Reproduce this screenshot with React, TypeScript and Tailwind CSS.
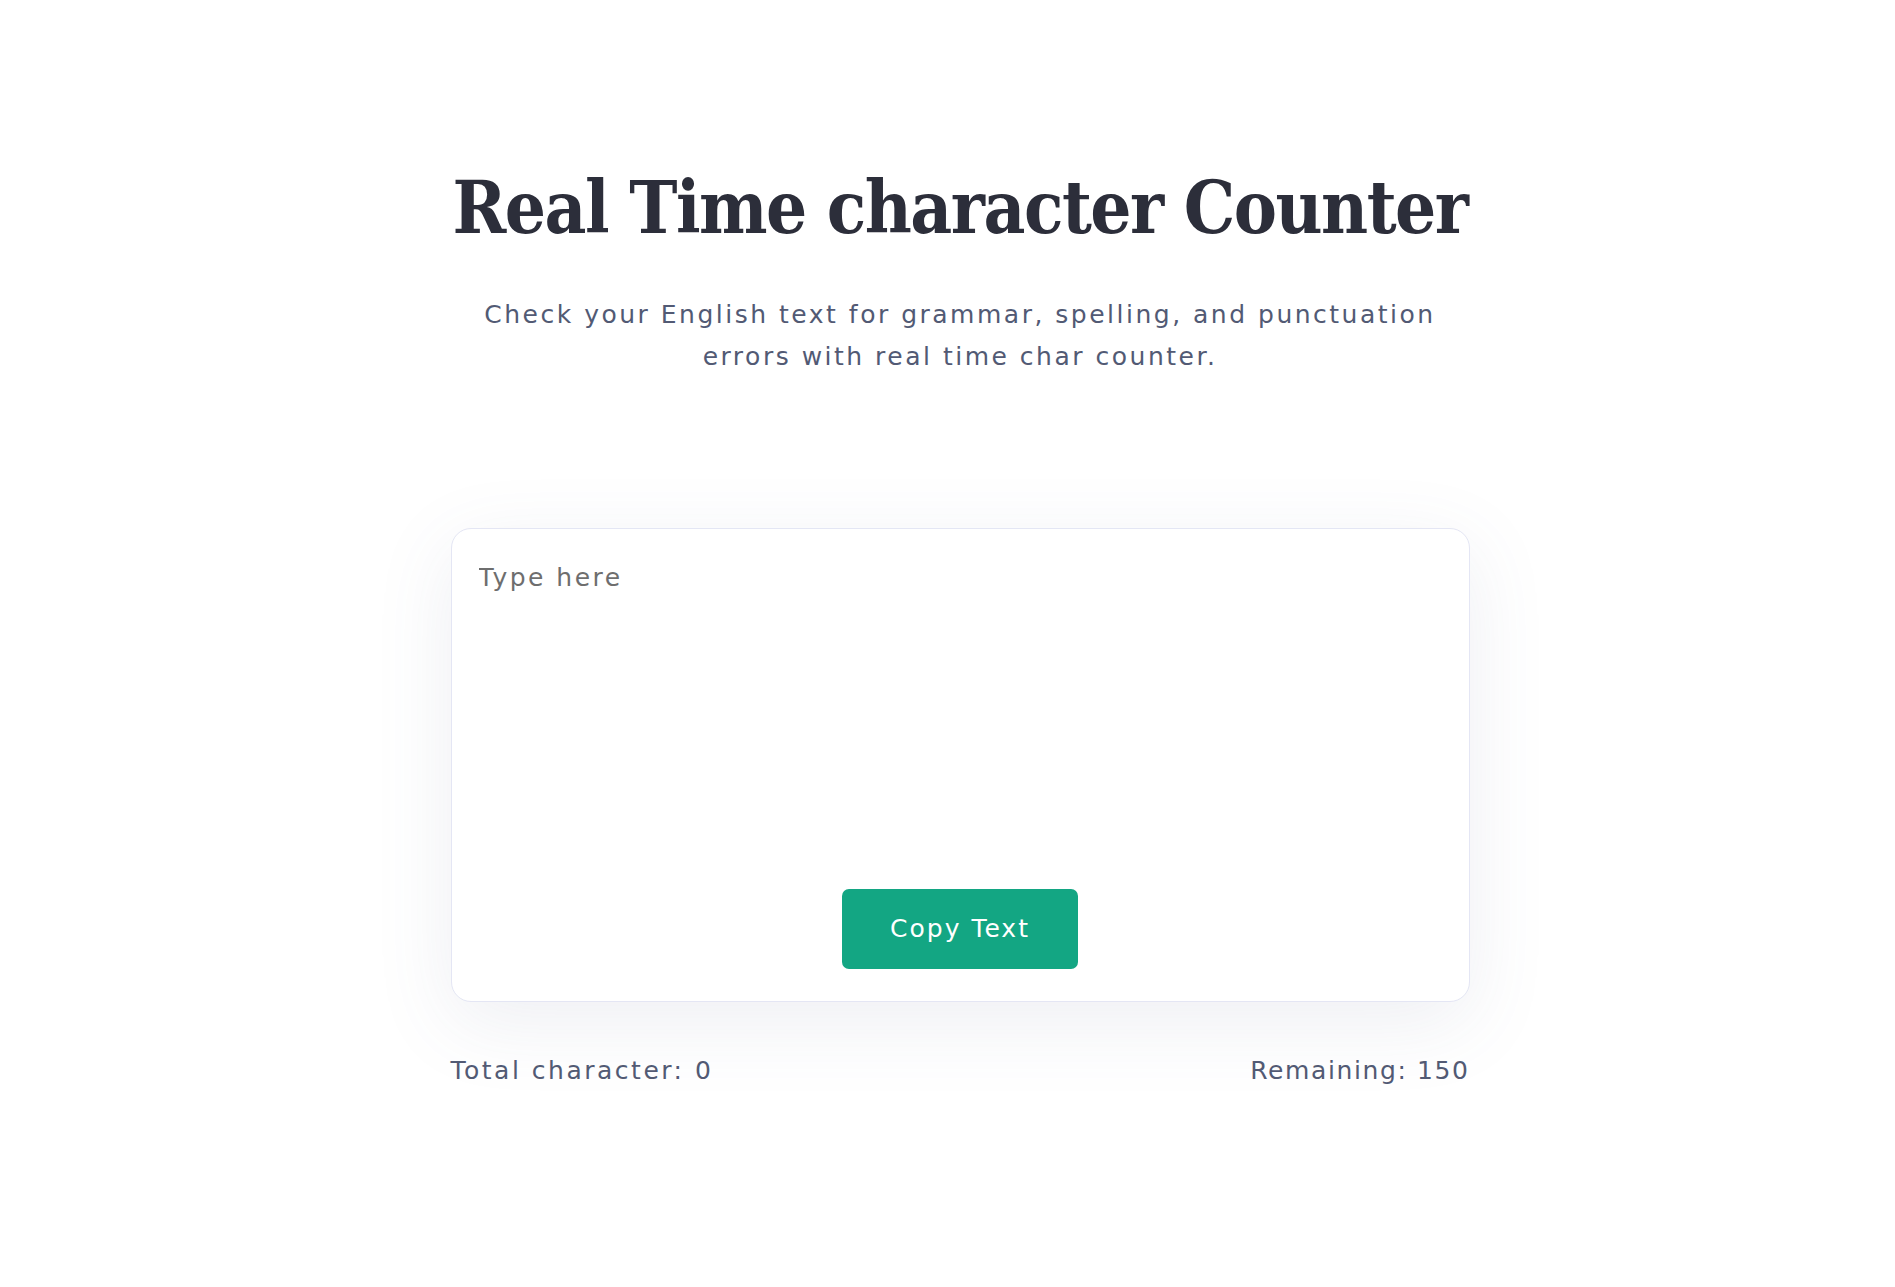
export default function App() {
  return (
    <div className="h-screen overflow-hidden bg-white flex flex-col items-center pt-[172px] pl-[25px]" style={{ fontFamily: "'DejaVu Sans', Inter, sans-serif" }}>
      {/* Heading */}
      <h1 className="text-[72px] leading-none font-bold text-[#2c2e3a] tracking-[-1.5px]" style={{ fontFamily: "'DejaVu Serif Condensed', 'DejaVu Serif', serif" }}>
        Real Time character Counter
      </h1>
      <p className="mt-[50px] w-[990px] text-center text-[25px] leading-[42px] tracking-[2.5px] text-[#525a74]">
        Check your English text for grammar, spelling, and punctuation errors with real time char counter.
      </p>

      {/* Card */}
      <div className="mt-[150px] w-[1019px]">
        <div className="h-[474px] rounded-[20px] border border-[#e4e6f4] bg-white shadow-[0_20px_80px_rgba(90,95,140,0.10)] flex flex-col px-[27px] pt-[30px] pb-[32px]">
          <textarea
            placeholder="Type here"
            className="flex-1 resize-none outline-none text-[25px] tracking-[2.5px] text-[#333] placeholder:text-[#6e6e6e]"
          />
          <div className="flex justify-center">
            <button className="w-[236px] h-[80px] rounded-[7px] bg-[#13a683] text-white text-[25px] tracking-[2px]">
              Copy Text
            </button>
          </div>
        </div>

        {/* Counters */}
        <div className="mt-[50px] flex justify-between text-[25px] text-[#525a74]">
          <span className="tracking-[2.5px]">Total character: 0</span>
          <span className="tracking-[1.6px]">Remaining: 150</span>
        </div>
      </div>
    </div>
  );
}
